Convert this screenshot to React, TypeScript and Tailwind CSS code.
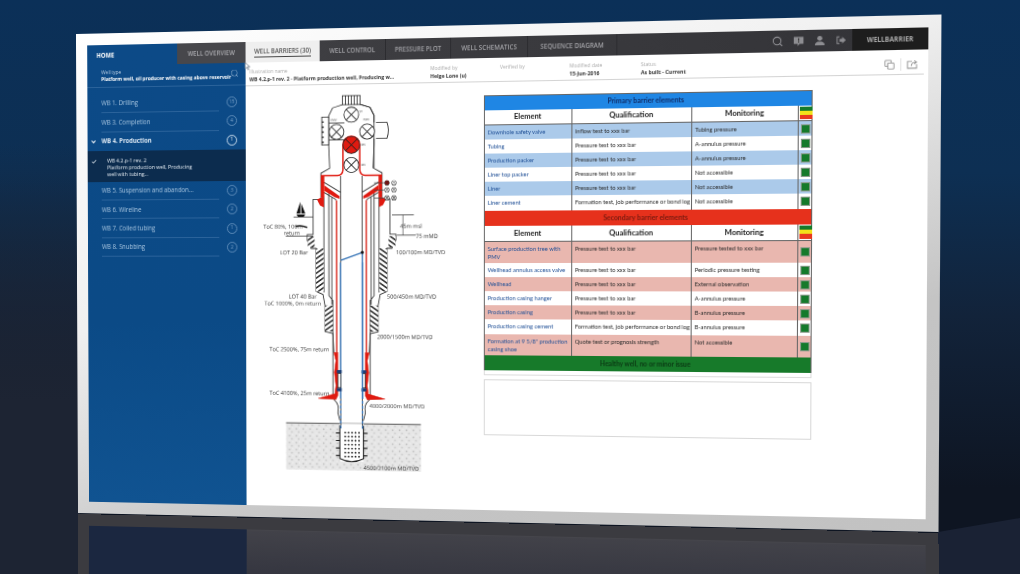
import React from 'react';
import { Search, ChevronDown, Check } from 'lucide-react';

type Pt = [number, number];

// maps a flat w x h box on to a quad on the screen (TL, TR, BR, BL)
const quadMatrix = (w: number, h: number, [p0, p1, p2, p3]: Pt[]) => {
  const dx1 = p1[0] - p2[0], dx2 = p3[0] - p2[0], dx3 = p0[0] - p1[0] + p2[0] - p3[0];
  const dy1 = p1[1] - p2[1], dy2 = p3[1] - p2[1], dy3 = p0[1] - p1[1] + p2[1] - p3[1];
  const den = dx1 * dy2 - dx2 * dy1;
  const g = (dx3 * dy2 - dx2 * dy3) / den;
  const k = (dx1 * dy3 - dx3 * dy1) / den;
  const a = p1[0] - p0[0] + g * p1[0], b = p3[0] - p0[0] + k * p3[0];
  const d = p1[1] - p0[1] + g * p1[1], e = p3[1] - p0[1] + k * p3[1];
  return `matrix3d(${[a / w, d / w, 0, g / w, b / h, e / h, 0, k / h, 0, 0, 1, 0, p0[0], p0[1], 0, 1].join(',')})`;
};

const FLAT_W = 864;
const FLAT_H = 496;
const WINDOW_QUAD: Pt[] = [[76, 34], [941.5, 14.5], [938.5, 532], [78, 513]];
const MIRROR_QUAD: Pt[] = [[78, 514], [938.5, 533], [941.5, 1050], [76, 993]];

const wells = [
  { name: 'WB 1. Drilling', n: 15 },
  { name: 'WB 3. Completion', n: 4 },
  { name: 'WB 4. Production', n: 1, open: true },
  { name: 'WB 5. Suspension and abandon...', n: 3 },
  { name: 'WB 6. Wireline', n: 2 },
  { name: 'WB 7. Coiled tubing', n: 1 },
  { name: 'WB 8. Snubbing', n: 2 },
];

const tabs = [
  { label: 'WELL BARRIERS (30)', w: 'w-[77px]', active: true },
  { label: 'WELL CONTROL', w: 'w-[68px]' },
  { label: 'PRESSURE PLOT', w: 'w-[66px]' },
  { label: 'WELL SCHEMATICS', w: 'w-[77px]' },
  { label: 'SEQUENCE DIAGRAM', w: 'w-[88px]' },
];

const primary = [
  ['Downhole safety valve', 'Inflow test to xxx bar', 'Tubing pressure'],
  ['Tubing', 'Pressure test to xxx bar', 'A-annulus pressure'],
  ['Production packer', 'Pressure test to xxx bar', 'A-annulus pressure'],
  ['Liner top packer', 'Pressure test to xxx bar', 'Not accessible'],
  ['Liner', 'Pressure test to xxx bar', 'Not accessible'],
  ['Liner cement', 'Formation test, job performance or bond log', 'Not accessible'],
];

const secondary = [
  ['Surface production tree with PMV', 'Pressure test to xxx bar', 'Pressure tested to xxx bar', 'tall'],
  ['Wellhead annulus access valve', 'Pressure test to xxx bar', 'Periodic pressure testing'],
  ['Wellhead', 'Pressure test to xxx bar', 'External observation'],
  ['Production casing hanger', 'Pressure test to xxx bar', 'A-annulus pressure'],
  ['Production casing', 'Pressure test to xxx bar', 'B-annulus pressure'],
  ['Production casing cement', 'Formation test, job performance or bond log', 'B-annulus pressure'],
  ['Formation at 9 5/8" production casing shoe', 'Quote test or prognosis strength', 'Not accessible', 'tall'],
];

const COLS = 'grid grid-cols-[87px_117px_102px_14px]';

const HeadRow = () => (
  <div className={`${COLS} h-[15.5px] bg-white border-b border-[#666] text-[#222] text-[7.5px] font-bold`}>
    {['Element', 'Qualification', 'Monitoring'].map((h) => (
      <div key={h} className="flex items-center justify-center border-r border-[#666]">{h}</div>
    ))}
    <div className="flex flex-col p-px">
      <div className="flex-1 bg-[#157a2b]" />
      <div className="flex-1 bg-[#f2e21a]" />
      <div className="flex-1 bg-[#e8391f]" />
    </div>
  </div>
);

const BarrierRow = ({ row, tint }: { row: string[]; tint: string }) => (
  <div className={`${COLS} ${row[3] ? 'h-[21.5px]' : 'h-[14.1px] whitespace-nowrap'} ${tint} text-[5.8px] leading-[8px] text-[#2b2b2b]`}>
    <div className="px-[3px] pt-[3px] text-[#1f4f96] border-r border-[#666]">{row[0]}</div>
    <div className="px-[3px] pt-[3px] border-r border-[#666]">{row[1]}</div>
    <div className="px-[3px] pt-[3px] border-r border-[#666]">{row[2]}</div>
    <div className="flex items-center justify-center">
      <div className="w-[9px] h-[9px] bg-[#157a2b] border border-[#8a9a8a]" />
    </div>
  </div>
);

const Sidebar = () => (
  <div className="w-[168px] shrink-0 flex flex-col bg-[linear-gradient(180deg,#0c4a87,#0b4a86_60%,#105391)] text-white">
    <div className="flex h-[21px]">
      <div className="w-[96px] flex items-center pl-[10px] text-[6.2px] font-bold">HOME</div>
      <div className="w-[72px] flex items-center justify-center bg-[#47474b] text-[#a9a9ad] text-[6.3px] font-semibold">WELL OVERVIEW</div>
    </div>
    <div className="relative h-[23px] pl-[15px] pt-[4px] border-b border-[#2b639b]">
      <div className="text-[5px] leading-[7px] text-[#b9cde2]">Well type</div>
      <div className="text-[5.05px] leading-[7px] font-bold whitespace-nowrap">Platform well, oil producer with casing above reservoir</div>
      <Search className="absolute right-[7px] top-[6px] w-[9px] h-[9px] text-[#a8c3dd]" strokeWidth={1.2} />
    </div>
    <div className="h-[7px]" />
    {wells.map((w) => (
      <React.Fragment key={w.name}>
        <div className="relative flex items-center h-[19.3px] pl-[15px] pr-[9px]">
          {w.open && <ChevronDown className="absolute left-[3px] w-[7px] h-[7px]" strokeWidth={3.5} />}
          <div className={`flex-1 h-full flex items-center border-b border-[#2b639b] text-[6.3px] whitespace-nowrap ${w.open ? 'font-bold text-[#dbe7f3] border-transparent' : 'text-[#a9c6e0]'}`}>
            {w.name}
          </div>
          <div className={`ml-[8px] w-[11px] h-[11px] rounded-full border flex items-center justify-center text-[5px] ${w.open ? 'border-[#cfe0f0] text-white' : 'border-[#5f8dba] text-[#7ea5cb]'}`}>
            {w.n}
          </div>
        </div>
        {w.open && (
          <div className="relative h-[32px] bg-[#0c2c4e] pl-[21px] pt-[7px] text-[5.4px] leading-[7.2px] text-[#e4ebf2]">
            <Check className="absolute left-[4px] top-[8px] w-[6px] h-[6px]" strokeWidth={3} />
            <div>WB 4.2.p-1 rev. 2</div>
            <div className="w-[100px]">Platform production well, Producing well with tubing...</div>
          </div>
        )}
      </React.Fragment>
    ))}
  </div>
);

const TopIcons = () => (
  <div className="flex items-center gap-[9px] pr-[1px] text-[#8e8e92]">
    <Search className="w-[11px] h-[11px]" strokeWidth={2.2} />
    <svg viewBox="0 0 12 12" className="w-[11px] h-[11px]" fill="currentColor">
      <path d="M1 1.5h10v7.5H7l-2 2.5V9H1z" />
      <rect x="5.4" y="3" width="1.2" height="3" fill="#333" />
      <rect x="5.4" y="6.6" width="1.2" height="1.1" fill="#333" />
    </svg>
    <svg viewBox="0 0 12 12" className="w-[11px] h-[11px]" fill="currentColor">
      <circle cx="6" cy="3.6" r="2.6" />
      <path d="M1 11c0-3 2.4-4 5-4s5 1 5 4z" />
    </svg>
    <svg viewBox="0 0 12 12" className="w-[11px] h-[11px]" fill="currentColor">
      <path d="M4.5 2H1.5v8h3V9H2.6V3h1.9z" />
      <path d="M4.5 4.5h2.6V2.4L11 6l-3.9 3.6V7.5H4.5z" />
    </svg>
  </div>
);

const TabBar = () => (
  <div className="flex h-[21px] bg-[linear-gradient(90deg,#3f3f43,#333337)]">
    {tabs.map((t) => (
      <div
        key={t.label}
        className={`${t.w} flex items-center justify-center text-[6.2px] font-semibold whitespace-nowrap ${
          t.active ? 'bg-[#efefef] text-[#555]' : 'text-[#a2a2a6] border-r border-[#2c2c30]'
        }`}
      >
        <span className={t.active ? 'border-b border-[#444] pb-[1px]' : ''}>{t.label}</span>
      </div>
    ))}
    <div className="flex-1 flex items-center justify-end">
      <TopIcons />
    </div>
    <div className="ml-[4px] w-[71px] flex items-center justify-center bg-[#1d1d1d] text-[#a9a9a9] text-[6.3px] font-bold">WELLBARRIER</div>
  </div>
);

const InfoField = ({ label, value, w }: { label: string; value: string; w: string }) => (
  <div className={`${w} shrink-0`}>
    <div className="text-[5px] leading-[7px] text-[#aaa]">{label}</div>
    <div className="text-[5.15px] leading-[8px] font-bold text-[#333] whitespace-nowrap">{value}</div>
  </div>
);

const InfoBar = () => (
  <div className="relative h-[24px] flex items-start pt-[5.5px] pl-[4px] mr-[4px] border-b border-[#d4d4d4]">
    <InfoField label="Illustration name" value="WB 4.2.p-1 rev. 2 - Platform production well, Producing w..." w="w-[186px]" />
    <InfoField label="Modified by" value="Helge Lone (u)" w="w-[70px]" />
    <InfoField label="Verified by" value="" w="w-[69px]" />
    <InfoField label="Modified date" value="15-Jun-2016" w="w-[70px]" />
    <InfoField label="Status" value="As built - Current" w="w-[100px]" />
    <div className="ml-auto flex items-center gap-[5px] pr-[6px] pt-[2px] text-[#8c8c8c]">
      <svg viewBox="0 0 12 12" className="w-[10px] h-[10px]" fill="none" stroke="currentColor" strokeWidth="1">
        <rect x="1" y="1" width="7" height="7" rx="1" />
        <rect x="4" y="4" width="7" height="7" rx="1" fill="#fff" />
      </svg>
      <div className="w-px h-[12px] bg-[#e2e2e2]" />
      <svg viewBox="0 0 12 12" className="w-[10px] h-[10px]" fill="none" stroke="currentColor" strokeWidth="1">
        <path d="M6 2.5H1v8h10V6" />
        <path d="M5 8c.5-3 2.5-4.5 5-4.5M8.5 1.5l2.5 2-2.5 2" />
      </svg>
    </div>
    <svg viewBox="0 0 10 14" className="absolute left-[-1px] top-[-1px] w-[6px] h-[9px]" fill="#fff" stroke="#6f7a88" strokeWidth="1">
      <path d="M1 1v10l2.6-2.2L5.6 13l1.8-.8-2-4.2H9z" />
    </svg>
  </div>
);

const Valve = ({ x, y, r = 7.5, fill = '#fff', sw = 0.8 }: { x: number; y: number; r?: number; fill?: string; sw?: number }) => (
  <g stroke="#222" strokeWidth={sw}>
    <circle cx={x} cy={y} r={r} fill={fill} />
    <path d={`M${x - r * 0.7} ${y - r * 0.7}L${x + r * 0.7} ${y + r * 0.7}M${x + r * 0.7} ${y - r * 0.7}L${x - r * 0.7} ${y + r * 0.7}`} />
  </g>
);

// left half of the well, mirrored for the right
const HalfWell = () => (
  <g fill="none" stroke="#222" strokeWidth="0.8">
    <path d="M343 105L333 108L329 116V145L330 168L321 173V199H313V234H307V240L311 248H316V291L323 294L325 305V331L333 333L334 352" />
    <path d="M324 197V292M329 192V295L333 300V395M332 197V304M341 176V425" />
    <path d="M324 182L341 192M324 192L336 199V200" />
    <rect x="316" y="248" width="7.5" height="43" fill="url(#hatch)" stroke="none" />
    <rect x="325" y="305" width="8" height="26" fill="url(#hatch)" stroke="none" />
    <rect x="307.5" y="236" width="7" height="11" fill="url(#hatch)" stroke="none" />
    <path d="M321 175.5H338Q343 175 343.5 170V145A8.5 8.5 0 0 1 352 136.5" stroke="#e01a10" strokeWidth="1.5" />
    <path d="M321 175H324.5V197H321Z" fill="#e01a10" stroke="none" />
    <path d="M324.5 185L340 196V198.5L335 197L324.5 190.5Z" fill="#e01a10" stroke="none" />
    <path d="M317 199L324 196V207L320 205Z" fill="#e01a10" stroke="none" />
    <path d="M337 200V355" stroke="#d8281c" strokeWidth="1.4" />
    <path d="M341 262V398" stroke="#2f6fb4" strokeWidth="1.3" />
    <path d="M341 400V428" stroke="#2f6fb4" strokeWidth="1.3" strokeDasharray="3 2" />
    <path d="M334 352L336 360L334.5 372L336 385L335 393L318 398L336 399L338 395V352Z" fill="#e01a10" stroke="#d8281c" strokeWidth="0.5" />
    <rect x="337" y="369.5" width="5" height="3.2" fill="#1c3f76" stroke="none" />
    <rect x="337" y="387.5" width="5" height="3.2" fill="#1c3f76" stroke="none" />
    <rect x="338" y="373" width="3" height="14" fill="#fff" />
    <path d="M334 399Q340 404 338 412L340 420" />
    <path d="M336 432.5H340M336 440H340M336 447.5H340M336 455H340" strokeWidth="1.2" />
  </g>
);

const labels: [string, number, number][] = [
  ['ToC 80%, 100m', 262, 228],
  ['return', 283, 234.5],
  ['LOT 20 Bar', 279, 254],
  ['100/100m MD/TVD', 397, 254],
  ['45m msl', 401, 228],
  ['75 mMD', 417, 238],
  ['LOT 40 Bar', 288, 298],
  ['ToC 1000%, 0m return', 263, 305],
  ['500/450m MD/TVD', 388, 298],
  ['2000/1500m MD/TVD', 378, 338],
  ['ToC 2500%, 75m return', 268, 351],
  ['ToC 4100%, 25m return', 268, 395],
  ['4000/2000m MD/TVD', 370, 407],
  ['4500/2100m MD/TVD', 364, 469],
];

const WellDiagram = () => (
  <svg viewBox="260 90 190 390" className="w-[195px] h-[395px] shrink-0 font-['Open_Sans',sans-serif]">
    <defs>
      <pattern id="hatch" width="4" height="4" patternUnits="userSpaceOnUse" patternTransform="rotate(-35)">
        <rect width="4" height="4" fill="#fff" />
        <rect width="4" height="1.6" fill="#333" />
      </pattern>
      <pattern id="rock" width="7" height="7" patternUnits="userSpaceOnUse">
        <rect width="7" height="7" fill="#e6e6e6" />
        <circle cx="1.5" cy="2" r="0.8" fill="#bdbdbd" />
        <circle cx="5" cy="1" r="0.5" fill="#f7f7f7" />
        <circle cx="4" cy="5" r="0.9" fill="#c9c9c9" />
        <circle cx="1" cy="6" r="0.5" fill="#f7f7f7" />
      </pattern>
    </defs>

    <rect x="285" y="423" width="137" height="47" fill="url(#rock)" />
    <path d="M285 423H422" stroke="#555" strokeWidth="0.8" />
    <rect x="340" y="423" width="24" height="38" fill="#fff" />
    <path d="M340 425V458Q352 464 364 458V425" fill="none" stroke="#222" strokeWidth="1.1" />
    {[432, 436, 440, 444, 448, 452, 456].map((y) =>
      [345.5, 349, 352.5, 356, 359.5].map((x) => <circle key={`${x}-${y}`} cx={x} cy={y} r="0.9" fill="#222" />),
    )}

    <HalfWell />
    <g transform="translate(704 0) scale(-1 1)">
      <HalfWell />
    </g>

    {/* wellhead */}
    <g fill="#fff" stroke="#222" strokeWidth="0.8">
      <rect x="343" y="96" width="18" height="9" />
      <path d="M346 96V105M349 96V105M352 96V105M355 96V105M358 96V105" />
      <path d="M361 105L371 108L375 116V123M375 139V168" fill="none" />
      <path d="M377 123H388Q391 131 388 139H377" />
      <rect x="322" y="117" width="7" height="28" />
      <path d="M322 122h2M322 127h2M322 132h2M322 137h2M322 142h2" strokeWidth="1.4" />
      <path d="M329 123H345M329 140H345" fill="none" />
    </g>
    <Valve x={352} y={115} />
    <Valve x={337} y={132} />
    <Valve x={368} y={132} />
    <Valve x={352} y={145} r={8.5} fill="#e01a10" />
    <Valve x={352} y={165} />
    <g fontSize="3" fill="#444">
      <text x="360" y="113">SV</text>
      <text x="331" y="121">KMV</text>
      <text x="364" y="121">PMV</text>
      <text x="362" y="146">MV</text>
      <text x="362" y="166">MV</text>
    </g>

    {/* side outlets */}
    <path d="M375 183H385M375 190H385M375 198H385" stroke="#444" strokeWidth="0.7" />
    {[183, 190, 198].map((y, i) => (
      <g key={y}>
        <Valve x={388} y={y} r={2.3} fill={i === 0 ? '#8a1414' : '#fff'} sw={0.45} />
        <Valve x={395} y={y} r={2.3} sw={0.45} />
      </g>
    ))}

    {/* blue control line */}
    <path d="M341 260L363 252V398" fill="none" stroke="#2f6fb4" strokeWidth="1.3" />
    <circle cx="363" cy="252" r="1.6" fill="#111" />

    {/* sea level, boat */}
    <path d="M296 214H305L303.5 216.5H297.5ZM300 201V213H296ZM301 203L305 213H301Z" fill="#111" />
    <path d="M293 216.5H313M393 215H415" stroke="#333" strokeWidth="0.6" fill="none" />
    <path d="M295 226Q300 224 307 227" stroke="#222" strokeWidth="1.4" fill="none" />
    <path d="M285 235.5H313M404 215V235M398 235H417" stroke="#333" strokeWidth="0.6" fill="none" />

    {labels.map(([t, x, y]) => (
      <text key={t} x={x} y={y} fontSize="5.6" fill="#333">{t}</text>
    ))}
  </svg>
);

const BarrierTable = () => (
  <div className="w-[320px] shrink-0 mt-[7.5px] ml-[34px] font-['Lato',sans-serif]">
    <div className="border border-[#666] border-b-0">
      <div className="h-[14px] flex items-center justify-center bg-[#1f86e4] text-[#102e6a] text-[6.8px] font-bold">Primary barrier elements</div>
      <HeadRow />
      {primary.map((r, i) => (
        <BarrierRow key={r[0]} row={r} tint={i % 2 === 0 ? 'bg-[#abcaea]' : 'bg-white'} />
      ))}
      <div className="h-[15.5px] flex items-center justify-center bg-[#e6311c] text-[#7c1b10] text-[6.8px] font-bold">Secondary barrier elements</div>
      <HeadRow />
      {secondary.map((r, i) => (
        <BarrierRow key={r[0]} row={r} tint={i % 2 === 0 ? 'bg-[#e9b7af]' : 'bg-white'} />
      ))}
      <div className="h-[15px] flex items-center justify-center bg-[#177a2a] text-[#0b3a14] text-[6.5px] font-bold">Healthy well, no or minor issue</div>
    </div>
    <div className="h-[5px] border border-t-0 border-[#dcdcdc]" />
    <div className="h-[56px] mt-[4px] border border-[#d8d8d8]" />
  </div>
);

const WellWindow = () => (
  <div
    className="absolute left-0 top-0 w-[864px] h-[496px] origin-top-left p-[12px] blur-[0.4px] bg-[linear-gradient(160deg,#ffffff,#f0f0f0_38%,#c4c4c4_72%,#c2c2c2)] font-['Open_Sans',sans-serif]"
    style={{ transform: quadMatrix(FLAT_W, FLAT_H, WINDOW_QUAD) }}
  >
    <div className="flex h-full bg-white">
      <Sidebar />
      <div className="flex-1 min-w-0 flex flex-col">
        <TabBar />
        <InfoBar />
        <div className="flex pl-[14.7px] pt-[5px]">
          <WellDiagram />
          <BarrierTable />
        </div>
      </div>
    </div>
  </div>
);

// the floor reflection is only the window's big colour areas
const Reflection = () => (
  <div
    className="absolute left-0 top-0 w-[864px] h-[496px] origin-top-left p-[12px] bg-[#3b3b40]"
    style={{ transform: quadMatrix(FLAT_W, FLAT_H, MIRROR_QUAD) }}
  >
    <div className="flex h-full">
      <div className="w-[168px] bg-[#1b2740]" />
      <div className="flex-1 bg-[linear-gradient(180deg,#424249,#2c2e3a_16%)] border-t border-[#45454b]" />
    </div>
  </div>
);

export default function App() {
  return (
    <div className="relative w-[1020px] h-[574px] overflow-hidden bg-[linear-gradient(180deg,#0b3058_0%,#0d2f53_30%,#12233a_55%,#0e1522_85%)]">
      <div className="absolute left-0 top-0 w-[80px] h-full bg-[linear-gradient(180deg,transparent_25%,#1d2433_70%)]" />
      <div className="absolute right-0 bottom-0 w-[82px] h-[64px] bg-[#1a2234] [clip-path:polygon(0_22px,100%_8px,100%_100%,0_100%)]" />
      <Reflection />
      <WellWindow />
    </div>
  );
}
